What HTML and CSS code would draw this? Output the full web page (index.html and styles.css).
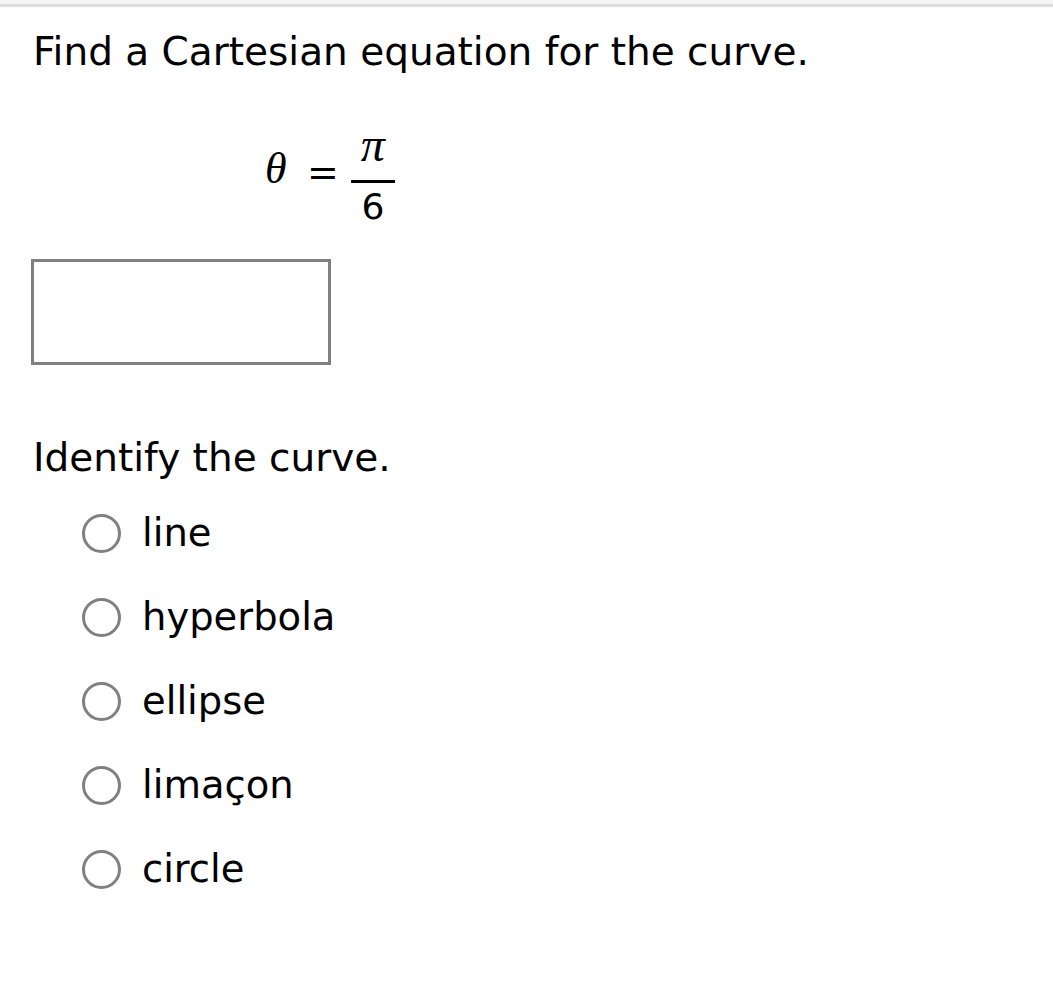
FILE: index.html
```html
<!DOCTYPE html>
<html>
<head>
<meta charset="utf-8">
<link rel="stylesheet" href="styles.css">
</head>
<body>
<div class="topbar"></div>
<main class="content">
  <p class="prompt">Find a Cartesian equation for the curve.</p>
  <div class="equation">
    <span class="var">θ</span>
    <span class="eq">=</span>
    <span class="frac">
      <span class="num">π</span>
      <span class="den">6</span>
    </span>
  </div>
  <div class="answer-box"></div>
  <p class="prompt second">Identify the curve.</p>
  <ul class="options">
    <li class="option"><span class="radio"></span><span class="label">line</span></li>
    <li class="option"><span class="radio"></span><span class="label">hyperbola</span></li>
    <li class="option"><span class="radio"></span><span class="label">ellipse</span></li>
    <li class="option"><span class="radio"></span><span class="label">limaçon</span></li>
    <li class="option"><span class="radio"></span><span class="label">circle</span></li>
  </ul>
</main>
</body>
</html>
```
FILE: styles.css
```css
html, body {
  margin: 0;
  padding: 0;
  background: #ffffff;
}
body {
  font-family: "DejaVu Sans", Verdana, sans-serif;
  color: #000;
}
.topbar {
  height: 4px;
  background: #f4f4f4;
  border-bottom: 3px solid #dedede;
}
.content {
  padding-left: 33px;
}
.prompt {
  margin: 0;
  font-size: 39px;
  line-height: 46px;
  padding-top: 22px;
}
.prompt.second {
  padding-top: 0;
  margin-top: 70px;
}
.equation {
  display: flex;
  align-items: flex-start;
  margin-left: 232px;
  margin-top: 40px;
  height: 117px;
  font-family: "Liberation Serif", "DejaVu Serif", serif;
  font-size: 44px;
}
.var {
  font-style: italic;
  width: 23px;
  line-height: 50px;
  padding-top: 29px;
}
.eq {
  margin-left: 19px;
  font-family: "DejaVu Sans", sans-serif;
  font-size: 38px;
  line-height: 40px;
  padding-top: 37px;
}
.frac {
  display: flex;
  flex-direction: column;
  align-items: center;
  margin-left: 12px;
  width: 44px;
}
.num {
  font-style: italic;
  font-size: 48px;
  line-height: 50px;
  padding-top: 5px;
  padding-bottom: 10px;
  border-bottom: 3px solid #000;
  width: 44px;
  text-align: center;
}
.den {
  font-family: "DejaVu Sans", sans-serif;
  font-size: 36px;
  line-height: 40px;
  padding-top: 4px;
}
.answer-box {
  margin-top: 27px;
  margin-left: -2px;
  width: 294px;
  height: 100px;
  border: 3px solid #808080;
}
.options {
  list-style: none;
  margin: 10px 0 0 0;
  padding: 0 0 0 49px;
}
.option {
  display: flex;
  align-items: center;
  height: 84px;
  font-size: 38.5px;
}
.radio {
  width: 33px;
  height: 33px;
  border: 3px solid #808080;
  border-radius: 50%;
  flex: none;
}
.label {
  margin-left: 21px;
  line-height: 46px;
}
```
